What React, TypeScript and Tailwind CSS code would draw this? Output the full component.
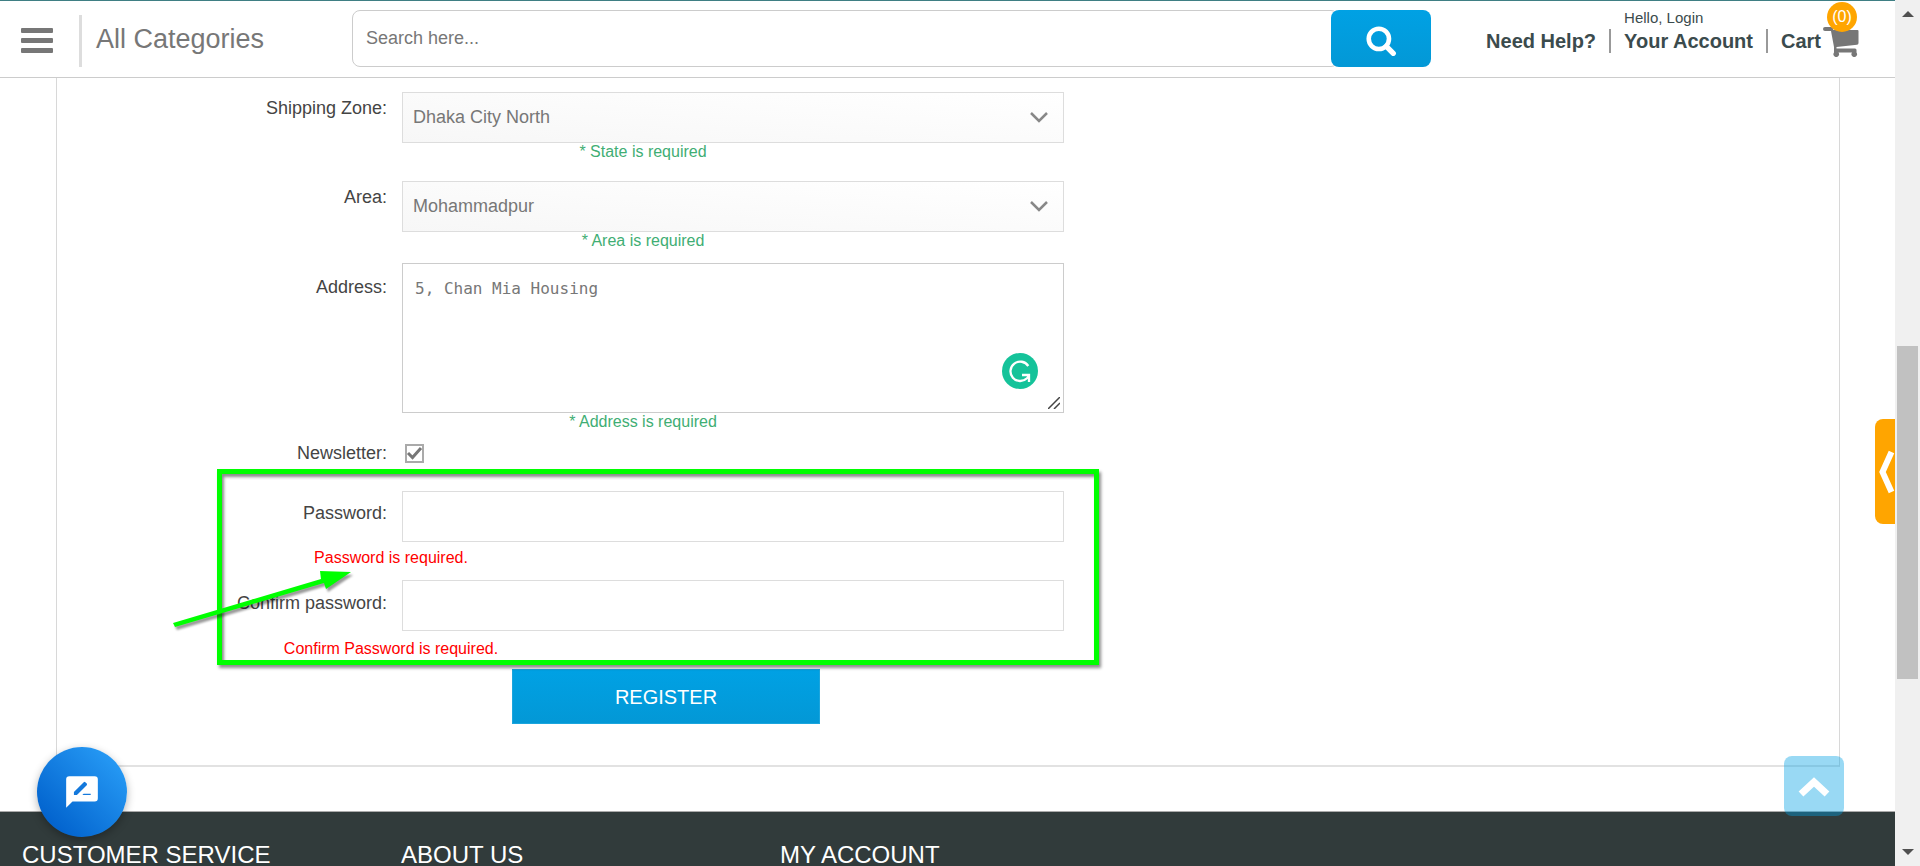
import React from "react";

const fieldBox = "block w-full h-[51px] border border-[#ddd] px-2.5 text-lg text-[#777] outline-none";

function Row({ label, htmlFor, children, pad = "pt-1" }: { label: string; htmlFor: string; children: React.ReactNode; pad?: string }) {
  return (
    <div className="flex gap-[15px]">
      <label htmlFor={htmlFor} className={`w-[165px] shrink-0 whitespace-nowrap text-right text-lg leading-6 text-[#444] ${pad}`}>
        {label}
      </label>
      <div className="min-w-0 flex-1">{children}</div>
    </div>
  );
}

function Select({ id, value }: { id: string; value: string }) {
  return (
    <div className="relative">
      <select id={id} defaultValue={value} className={`${fieldBox} appearance-none bg-linear-to-tr from-[#f7f7f7] to-white pb-0.5`}>
        <option>{value}</option>
      </select>
      <svg className="pointer-events-none absolute top-5 right-4 h-3 w-[18px]" viewBox="0 0 18 12" fill="none" stroke="#888" strokeWidth="2.500">
        <path d="M1 1l8 8 8-8" />
      </svg>
    </div>
  );
}

function Hint({ children }: { children: React.ReactNode }) {
  return <p className="text-center text-base leading-[18px] text-[#3fae74]">{children}</p>;
}

function Invalid({ children }: { children: React.ReactNode }) {
  return <p className="w-[338px] text-center text-base leading-8 text-[#f00]">{children}</p>;
}

function Header() {
  return (
    <header className="flex h-[78px] shrink-0 items-start border-t border-b border-t-[#3f7f84] border-b-[#ccc] bg-white pl-[21px] text-[#3b4b4d]">
      <button aria-label="Menu" className="mt-[27px] flex w-8 flex-col gap-[5px]">
        <span className="h-[5px] w-full rounded-[1px] bg-[#777]" />
        <span className="h-[5px] w-full rounded-[1px] bg-[#777]" />
        <span className="h-[5px] w-full rounded-[1px] bg-[#777]" />
      </button>
      <a href="#categories" className="mt-3.5 ml-[26px] flex h-[52px] w-[273px] items-center border-l-3 border-[#ddd] pb-1 pl-3.5 text-[27px] text-[#777]">
        All Categories
      </a>
      <form className="mt-[9px] flex h-[57px] flex-1" onSubmit={(e) => e.preventDefault()}>
        <input aria-label="Search" placeholder="Search here..." className="-mr-2 min-w-0 flex-1 rounded-lg border border-[#ccc] px-[13px] pb-0.5 text-lg outline-none placeholder:text-[#777]" />
        <button aria-label="Search" className="relative flex w-[100px] items-center justify-center rounded-lg bg-linear-to-b from-[#00a1e4] to-[#0398d6] pt-1">
          <svg className="h-8 w-8" viewBox="0 0 30 30" fill="none" stroke="#fff">
            <circle cx="13" cy="13" r="9.500" strokeWidth="4.300" />
            <path d="M20 20l6.500 6.500" strokeWidth="5" strokeLinecap="round" />
          </svg>
        </button>
      </form>
      <nav className="mr-[36px] ml-[55px] flex text-xl font-bold">
        <a href="#help" className="mt-7 flex h-6 items-center border-r-2 border-[#999] pr-[13px]">Need Help?</a>
        <a href="#account" className="mt-2 flex flex-col gap-0.5 pl-[13px]">
          <span className="text-[15px] leading-[18px] font-normal">Hello, Login</span>
          <span className="flex h-6 items-center border-r-2 border-[#999] pr-[13px]">Your Account</span>
        </a>
        <a href="#cart" className="relative mt-7 flex h-6 items-center pl-[13px]">
          Cart
          <svg className="mt-0.5 ml-0.5 h-[30px] w-[36px]" viewBox="0 0 36 30" fill="#777">
            <path d="M2 0h6q2 0 2.300 3H34.500q1 0 1 1V16q0 1.500-1.500 1.800L13.500 20v1.500H32q1.500 0 1.500 1.500v2.500a2.800 2.800 0 1 1-4.500 0H15.500a2.800 2.800 0 1 1-4.500 0v-5.500L8 4H2Q0 4 0 2T2 0z" />
          </svg>
          <span className="absolute -top-[27px] right-0.5 flex h-[30px] w-[30px] items-center justify-center rounded-full bg-[#ffa500] text-base font-normal text-white">(0)</span>
        </a>
      </nav>
    </header>
  );
}

function RegistrationForm() {
  return (
    <form className="relative flex w-[1007px] flex-col" onSubmit={(e) => e.preventDefault()}>
      <div className="flex w-[842px] flex-col self-end">
        <Row label="Shipping Zone:" htmlFor="zone">
          <Select id="zone" value="Dhaka City North" />
        </Row>
        <Hint>* State is required</Hint>
        <div className="mt-5">
          <Row label="Area:" htmlFor="area">
            <Select id="area" value="Mohammadpur" />
          </Row>
        </div>
        <Hint>* Area is required</Hint>
        <div className="mt-[13px]">
          <Row label="Address:" htmlFor="address" pad="pt-3">
            <div className="relative">
              <textarea id="address" defaultValue="5, Chan Mia Housing" className="block h-[150px] w-full resize-none border border-[#ccc] px-3 py-[13px] font-['DejaVu_Sans_Mono',monospace] text-base leading-6 text-[#777] outline-none" />
              <svg className="absolute right-[26px] bottom-6 h-9 w-9" viewBox="0 0 36 36" fill="none">
                <circle cx="18" cy="18" r="18" fill="#15c39a" />
                <path d="M26.300 13A9.700 9.700 0 1 0 25 25.200L27 22.700" stroke="#fff" strokeWidth="2.300" />
                <path d="M20 22h7v7" stroke="#fff" strokeWidth="2.300" />
              </svg>
              <svg className="absolute right-1 bottom-1 h-3 w-3" viewBox="0 0 12 12" stroke="#444" strokeWidth="1.500">
                <path d="M0 12L12 0M6 12l6-6" />
              </svg>
            </div>
          </Row>
        </div>
        <Hint>* Address is required</Hint>
        <div className="mt-2.5">
          <Row label="Newsletter:" htmlFor="newsletter" pad="">
            <span className="relative mt-[3px] ml-[3px] block h-[19px] w-[19px]">
              <input id="newsletter" type="checkbox" defaultChecked className="peer block h-[19px] w-[19px] appearance-none border-2 border-[#aaa] bg-white" />
              <svg className="pointer-events-none absolute inset-0 hidden h-[19px] w-[19px] peer-checked:block" viewBox="0 0 19 19" fill="none" stroke="#777" strokeWidth="3">
                <path d="M3 9l4.500 4.500L16 4" />
              </svg>
            </span>
          </Row>
        </div>
        <div className="mt-[26px]">
          <Row label="Password:" htmlFor="password" pad="pt-2.5">
            <input id="password" type="password" className={fieldBox} />
          </Row>
        </div>
        <Invalid>Password is required.</Invalid>
        <div className="mt-1.5">
          <Row label="Confirm password:" htmlFor="confirm" pad="pt-[11px]">
            <input id="confirm" type="password" className={fieldBox} />
          </Row>
        </div>
        <div className="pt-0.5">
          <Invalid>Confirm Password is required.</Invalid>
        </div>
        <button className="mt-1 ml-[290px] h-[55px] w-[308px] border border-[#1ba5dd] bg-linear-to-b from-[#00a1e4] to-[#0398d6] text-xl text-white">REGISTER</button>
      </div>
      <div className="pointer-events-none absolute top-[377px] left-40 h-[196px] w-[882px] border-5 border-[#0f0] shadow-[2px_3px_3px_rgba(0,0,0,0.45),inset_2px_3px_3px_rgba(0,0,0,0.45)]" />
      <svg className="pointer-events-none absolute top-[478px] left-[110px] h-[80px] w-[200px] drop-shadow-[2px_3px_1px_rgba(0,0,0,0.4)]" viewBox="0 0 200 80" fill="#0f0">
        <path d="M6 53L154 9 153 1l31 1-25 17-2-6L8 57z" />
      </svg>
    </form>
  );
}

function Scrollbar() {
  return (
    <div className="flex h-full w-[25px] shrink-0 flex-col items-center justify-between bg-[#f0f0f0] py-[11px]">
      <svg className="h-1.5 w-3" viewBox="0 0 12 6" fill="#505050"><path d="M0 6l6-6 6 6z" /></svg>
      <div className="flex w-full flex-1 flex-col items-center">
        <div className="flex-[329]" />
        <div className="w-[21px] flex-[333] bg-[#c1c1c1]" />
        <div className="flex-[170]" />
      </div>
      <svg className="h-1.5 w-3" viewBox="0 0 12 6" fill="#505050"><path d="M0 0l6 6 6-6z" /></svg>
    </div>
  );
}

export default function App() {
  return (
    <div className="flex h-screen overflow-hidden bg-white font-['Liberation_Sans',Arial,sans-serif]">
      <div className="relative flex min-w-0 flex-1 flex-col overflow-hidden">
        <Header />
        <main className="mr-[55px] mb-11 ml-14 shrink-0 border-x border-b-2 border-[#d8d8d8] border-b-[#e2e2e2] pt-3.5 pb-[41px]">
          <RegistrationForm />
        </main>
        <footer className="grid shrink-0 grid-cols-5 border-t border-[#aaa] bg-[#313b3b] pt-[27px] pb-8 text-2xl text-white">
          <h2 className="pl-[22px]">CUSTOMER SERVICE</h2>
          <h2 className="pl-[22px]">ABOUT US</h2>
          <h2 className="pl-[22px]">MY ACCOUNT</h2>
        </footer>

        <button aria-label="Chat" className="absolute bottom-[29px] left-[37px] flex h-[90px] w-[90px] items-center justify-center rounded-full bg-linear-to-tr from-[#0058c6] to-[#2ca3fb] shadow-[0_3px_8px_rgba(0,0,0,0.3)]">
          <svg className="h-[38px] w-[38px]" viewBox="0 0 24 24">
            <path fill="#fff" d="M20 2H4a2 2 0 0 0-2 2v18l4-4h14a2 2 0 0 0 2-2V4a2 2 0 0 0-2-2z" />
            <path fill="#1479dc" d="M6.900 13.900v-1.900l6.200-6.200q.5-.4 1 0l.9.900q.4.500 0 1L8.800 13.900zM12.200 13.900l.8-.8h4.500v.8z" />
          </svg>
        </button>
        <button aria-label="Back to top" className="absolute right-[51px] bottom-[50px] flex h-[60px] w-[60px] items-center justify-center rounded-lg bg-[#009fe3]/40">
          <svg className="h-6 w-8" viewBox="0 0 32 24" fill="none" stroke="#fff" strokeWidth="7">
            <path d="M3 20L16 8l13 12" />
          </svg>
        </button>
        <button aria-label="Open panel" className="absolute right-0 bottom-[342px] flex h-[105px] w-5 items-center justify-end rounded-l-lg bg-[#ffa500]">
          <svg className="h-11 w-[17px]" viewBox="0 0 16 44" fill="none" stroke="#fff" strokeWidth="6">
            <path d="M13 2L4 22l9 20" />
          </svg>
        </button>
      </div>
      <Scrollbar />
    </div>
  );
}
